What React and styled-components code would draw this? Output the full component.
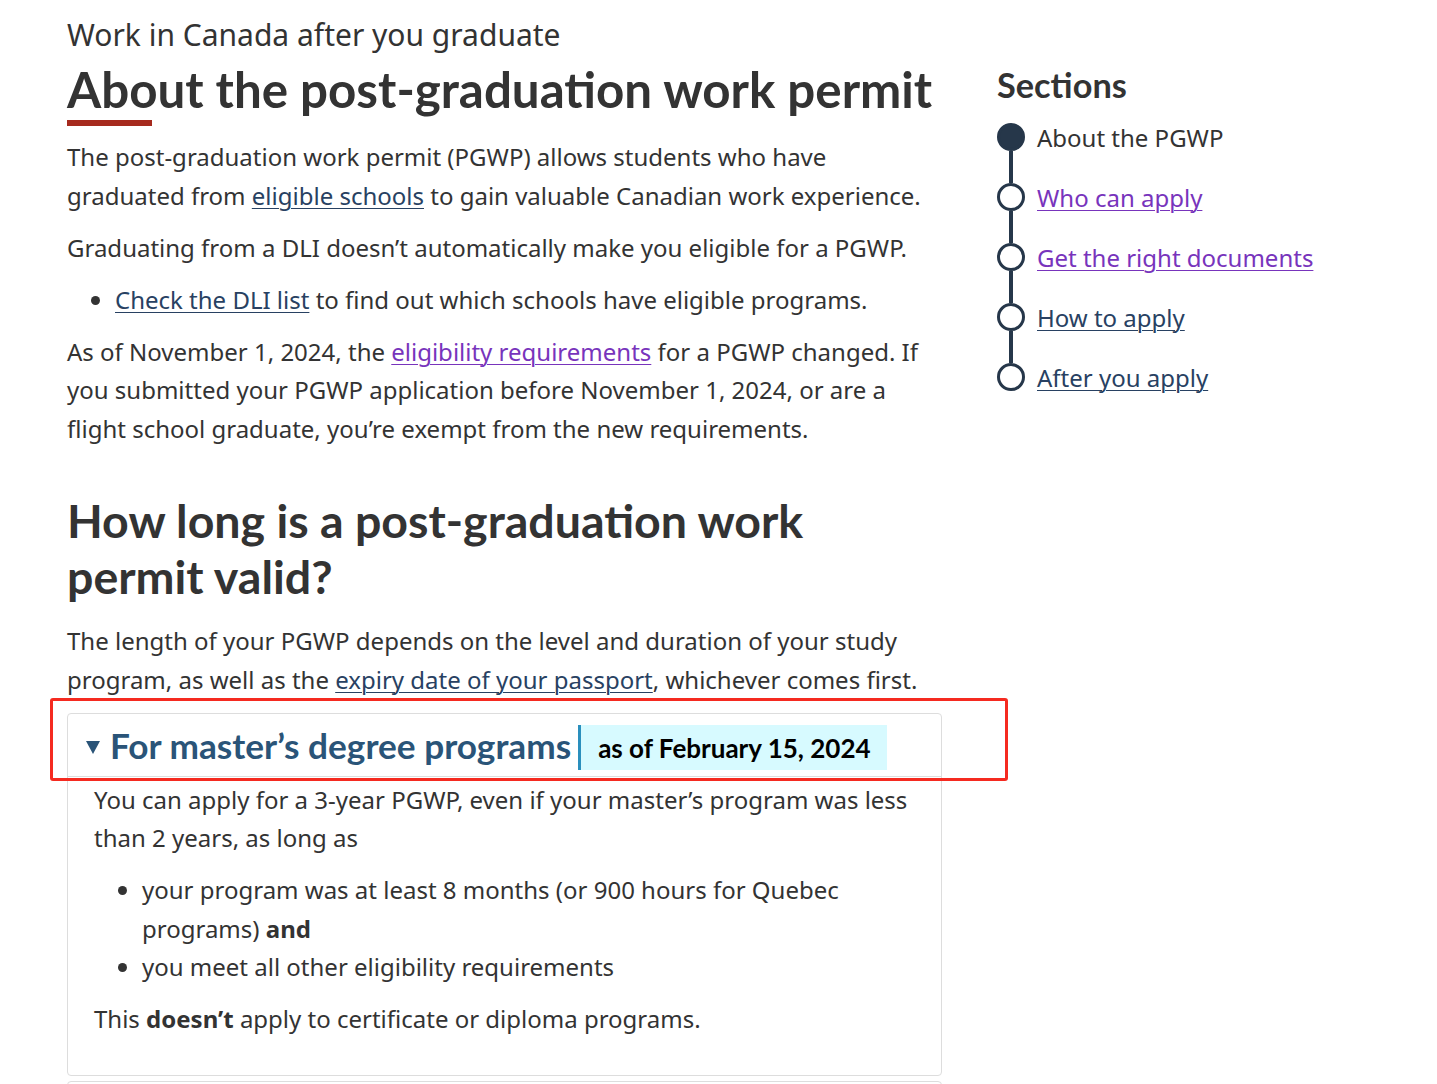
import React from 'react';
import styled, { createGlobalStyle } from 'styled-components';

const GlobalStyle = createGlobalStyle`
  body {
    margin: 0;
    background: #fff;
    color: #333;
    font-family: "Noto Sans", "DejaVu Sans", sans-serif;
  }
`;

const Page = styled.div`
  position: relative;
  display: flex;
  gap: 55px;
  padding: 16px 0 0 67px;
`;

const Main = styled.main`
  width: 875px;
  flex: none;
`;

const Kicker = styled.div`
  font-size: 30px;
  line-height: 38px;
  color: #333;
`;

const Title = styled.h1`
  margin: 7px 0 0;
  font-family: Lato, "Liberation Sans", sans-serif;
  font-weight: 700;
  font-size: 49.3px;
  line-height: 57px;
  color: #333;
  white-space: nowrap;

  &::after {
    content: '';
    display: block;
    width: 85px;
    height: 6px;
    margin-top: 2px;
    background: #a62a1e;
  }
`;

const Lead = styled.div`
  margin-top: 12px;
`;

const P = styled.p`
  margin: 0 0 13.5px;
  font-size: 24px;
  line-height: 38.5px;
`;

const List = styled.ul`
  margin: 0 0 13.5px;
  padding-left: 48px;
  font-size: 24px;
  line-height: 38.5px;
`;

const A = styled.a`
  color: ${props => props.visited ? '#7834bc' : '#284162'};
  text-decoration: underline;
  text-decoration-thickness: 1px;
  text-underline-offset: 3px;
`;

const Heading = styled.h2`
  margin: 44px 0 18px;
  font-family: Lato, "Liberation Sans", sans-serif;
  font-weight: 700;
  font-size: 46.5px;
  line-height: 56px;
  color: #333;
`;

const Details = styled.div`
  margin-top: ${props => props.gap || 11.5}px;
  min-height: ${props => props.collapsed ? '60px' : 'auto'};
  border: 1px solid #ddd;
  border-radius: 4px;
`;

const Summary = styled.div`
  display: flex;
  align-items: center;
  padding: 10px 18px 4px;
  border-bottom: 1px solid #ddd;
`;

const Caret = styled.svg`
  width: 14px;
  height: 13px;
  margin: 0 10px 0 0;
  flex: none;
`;

const SummaryText = styled.span`
  font-family: Lato, "Liberation Sans", sans-serif;
  font-weight: 700;
  font-size: 35.2px;
  color: #2a5478;
  margin: 0 7px 6px 0;
`;

const Badge = styled.span`
  display: flex;
  align-items: center;
  height: 45px;
  padding: 0 16px 0 17px;
  border-left: 3px solid #2a8fbd;
  background: #d7faff;
  font-family: Lato, "Liberation Sans", sans-serif;
  font-weight: 700;
  font-size: 26px;
  color: #000;
`;

const Body = styled.div`
  padding: 4px 20px 23px 26px;
`;

const Side = styled.aside`
  padding-top: 47px;
`;

const SideTitle = styled.h2`
  margin: 0;
  font-family: Lato, "Liberation Sans", sans-serif;
  font-weight: 700;
  font-size: 34.3px;
  line-height: 44px;
  color: #333;
`;

const Steps = styled.ol`
  list-style: none;
  margin: 0;
  padding: 0;
`;

const Step = styled.li`
  position: relative;
  display: flex;
  align-items: center;
  gap: 12px;
  height: 60px;
  font-size: 24px;

  &:not(:last-child)::after {
    content: '';
    position: absolute;
    left: 12px;
    top: 44px;
    width: 4px;
    height: 32px;
    background: #26374a;
  }
`;

const Dot = styled.span`
  box-sizing: border-box;
  width: 28px;
  height: 28px;
  flex: none;
  border-radius: 50%;
  border: 3px solid #26374a;
  background: ${props => props.active ? '#26374a' : '#fff'};
`;

const Highlight = styled.div`
  position: absolute;
  left: 50px;
  top: 698px;
  width: 958px;
  height: 83px;
  box-sizing: border-box;
  border: 3px solid #f52a20;
  border-radius: 3px;
  pointer-events: none;
`;

const steps = [
  { label: 'About the PGWP', active: true },
  { label: 'Who can apply', visited: true },
  { label: 'Get the right documents', visited: true },
  { label: 'How to apply' },
  { label: 'After you apply' },
];

export default function App() {
  return (
    <>
      <GlobalStyle />
      <Page>
        <Main>
          <Kicker>Work in Canada after you graduate</Kicker>
          <Title>About the post-graduation work permit</Title>
          <Lead>
            <P>
              The post-graduation work permit (PGWP) allows students who have graduated from{' '}
              <A href="#">eligible schools</A> to gain valuable Canadian work experience.
            </P>
            <P>Graduating from a DLI doesn’t automatically make you eligible for a PGWP.</P>
            <List>
              <li><A href="#">Check the DLI list</A> to find out which schools have eligible programs.</li>
            </List>
            <P>
              As of November 1, 2024, the <A href="#" visited>eligibility requirements</A> for a PGWP
              changed. If you submitted your PGWP application before November 1, 2024, or are a flight
              school graduate, you’re exempt from the new requirements.
            </P>
          </Lead>

          <Heading>How long is a post-graduation work permit valid?</Heading>
          <P>
            The length of your PGWP depends on the level and duration of your study program, as well as
            the <A href="#">expiry date of your passport</A>, whichever comes first.
          </P>

          <Details>
            <Summary>
              <Caret viewBox="0 0 14 13">
                <polygon points="0,0 14,0 7,13" fill="#2a5478" />
              </Caret>
              <SummaryText>For master’s degree programs</SummaryText>
              <Badge>as of February 15, 2024</Badge>
            </Summary>
            <Body>
              <P>
                You can apply for a 3-year PGWP, even if your master’s program was less than 2 years,
                as long as
              </P>
              <List>
                <li>your program was at least 8 months (or 900 hours for Quebec programs) <strong>and</strong></li>
                <li>you meet all other eligibility requirements</li>
              </List>
              <P>This <strong>doesn’t</strong> apply to certificate or diploma programs.</P>
            </Body>
          </Details>

          <Details gap={5} collapsed />
        </Main>

        <Side>
          <SideTitle>Sections</SideTitle>
          <Steps>
            {steps.map(step => (
              <Step key={step.label}>
                <Dot active={step.active} />
                {step.active ? (
                  <span>{step.label}</span>
                ) : (
                  <A href="#" visited={step.visited}>{step.label}</A>
                )}
              </Step>
            ))}
          </Steps>
        </Side>

        <Highlight />
      </Page>
    </>
  );
}
